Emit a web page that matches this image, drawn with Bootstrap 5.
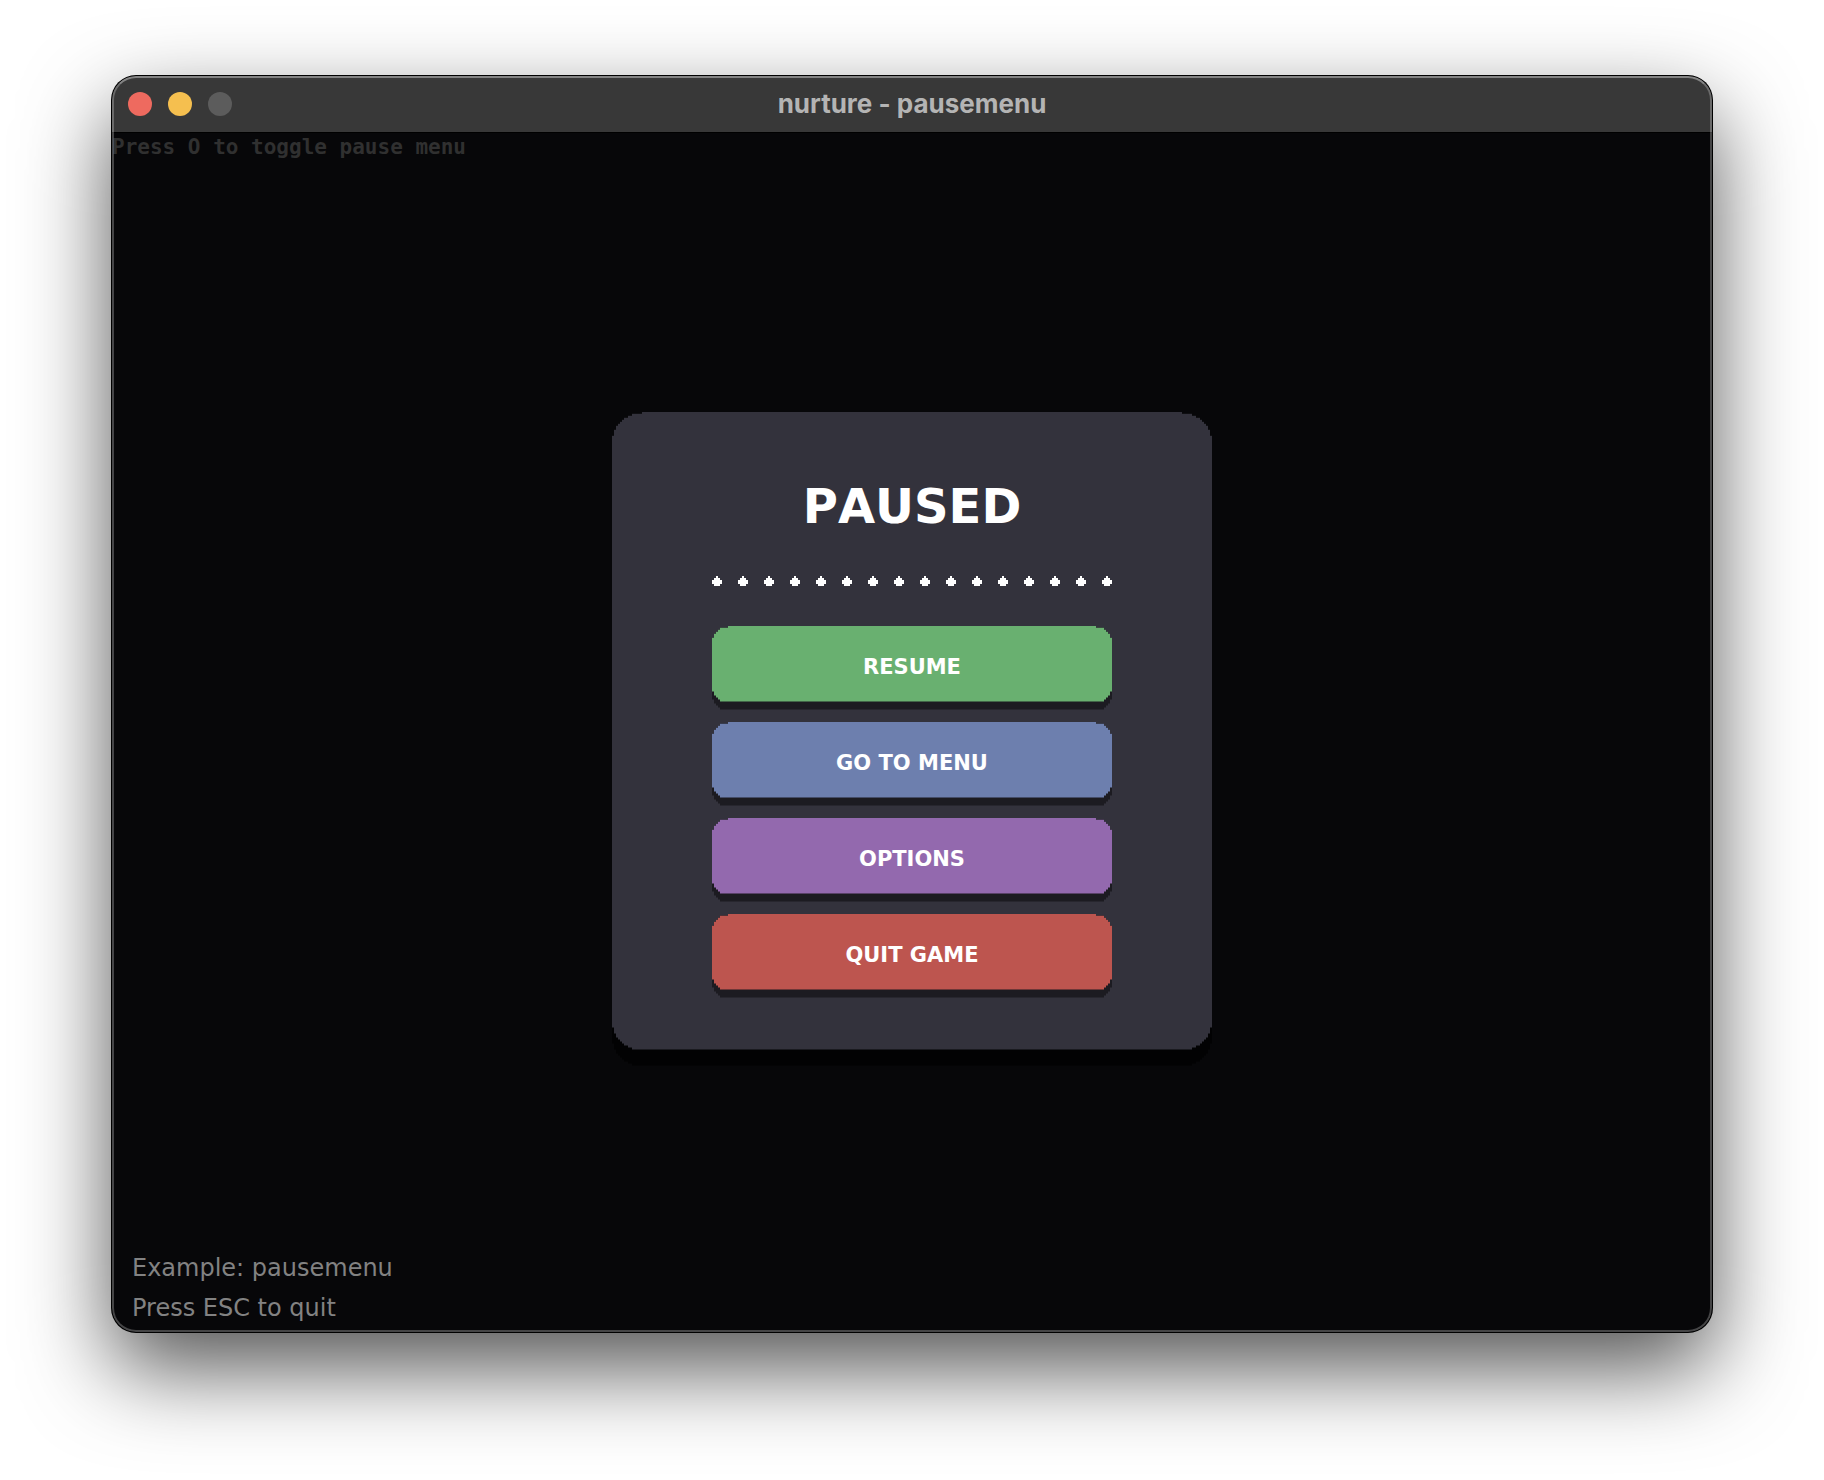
<!DOCTYPE html>
<html lang="en">
<head>
<meta charset="utf-8">
<meta name="viewport" content="width=device-width, initial-scale=1">
<title>nurture - pausemenu</title>
<link href="https://cdn.jsdelivr.net/npm/bootstrap@5.3.0/dist/css/bootstrap.min.css" rel="stylesheet">
<style>
  body { background: #fff; font-family: "DejaVu Sans", sans-serif; }
  .desktop { min-height: 100vh; padding: 76px 112px 148px; overflow: hidden; }
  .app-window {
    position: relative;
    background: #070709;
    border-radius: 24px;
    box-shadow: 0 0 0 1px #000, 0 36px 88px rgba(0, 0, 0, .68);
    overflow: hidden;
  }
  /* light rim drawn over the window edge */
  .app-window::after {
    content: "";
    position: absolute;
    inset: 0;
    border: 2px solid rgba(255, 255, 255, .25);
    border-top-color: rgba(255, 255, 255, .38);
    border-radius: 24px;
    pointer-events: none;
  }
  .title-bar { height: 57px; background: #383838; border-bottom: 1px solid #000; }
  .title-text { font: 700 26px/32px Inter, sans-serif; color: #b4b4b4; margin: 0; }
  .lights { width: 136px; padding-left: 16px; gap: 16px; }
  .lights span { width: 24px; height: 24px; border-radius: 50%; }
  .light-close { background: #ee6a5f; }
  .light-min { background: #f5bf4f; }
  .light-off { background: #5c5c5c; }
  .hint { font: bold 21px/28px "DejaVu Sans Mono", monospace; color: #303030; }
  .stage { padding-top: 68px; }
  .credits { font-size: 24px; line-height: 40px; color: #828282; padding: 0 20px 4px; }

  /* stepped corners on a 2px grid */
  .panel-cut, .panel-face {
    clip-path: polygon(
      0 24px, 2px 24px, 2px 18px, 4px 18px, 4px 14px, 6px 14px, 6px 12px, 8px 12px, 8px 10px, 10px 10px, 10px 8px, 12px 8px, 12px 6px, 16px 6px, 16px 4px, 20px 4px, 20px 2px, 30px 2px, 30px 0,
      calc(100% - 30px) 0, calc(100% - 30px) 2px, calc(100% - 20px) 2px, calc(100% - 20px) 4px, calc(100% - 16px) 4px, calc(100% - 16px) 6px, calc(100% - 12px) 6px, calc(100% - 12px) 8px, calc(100% - 10px) 8px, calc(100% - 10px) 10px, calc(100% - 8px) 10px, calc(100% - 8px) 12px, calc(100% - 6px) 12px, calc(100% - 6px) 14px, calc(100% - 4px) 14px, calc(100% - 4px) 18px, calc(100% - 2px) 18px, calc(100% - 2px) 24px, 100% 24px,
      100% calc(100% - 22px), calc(100% - 2px) calc(100% - 22px), calc(100% - 2px) calc(100% - 16px), calc(100% - 4px) calc(100% - 16px), calc(100% - 4px) calc(100% - 12px), calc(100% - 6px) calc(100% - 12px), calc(100% - 6px) calc(100% - 10px), calc(100% - 8px) calc(100% - 10px), calc(100% - 8px) calc(100% - 8px), calc(100% - 10px) calc(100% - 8px), calc(100% - 10px) calc(100% - 6px), calc(100% - 12px) calc(100% - 6px), calc(100% - 12px) calc(100% - 4px), calc(100% - 16px) calc(100% - 4px), calc(100% - 16px) calc(100% - 2px), calc(100% - 20px) calc(100% - 2px), calc(100% - 20px) 100%,
      20px 100%, 20px calc(100% - 2px), 16px calc(100% - 2px), 16px calc(100% - 4px), 12px calc(100% - 4px), 12px calc(100% - 6px), 10px calc(100% - 6px), 10px calc(100% - 8px), 8px calc(100% - 8px), 8px calc(100% - 10px), 6px calc(100% - 10px), 6px calc(100% - 12px), 4px calc(100% - 12px), 4px calc(100% - 16px), 2px calc(100% - 16px), 2px calc(100% - 22px), 0 calc(100% - 22px));
  }
  .panel-cut { width: 600px; max-width: 100%; background: #020203; padding-bottom: 16px; }
  .panel-face { background: #33323c; padding: 64px 100px 52px; }
  .pause-title { font-size: 48px; line-height: 60px; font-weight: 700; font-kerning: none; color: #fff; margin: 0 0 40px; text-align: center; }
  .pip-row { margin-bottom: 40px; }
  .pip-row svg { width: 10px; height: 10px; fill: #fff; display: block; }
  .menu-list { gap: 12px; }
  .menu-btn {
    display: block; width: 100%; border: 0; padding: 0 0 8px;
    background: #1c1b21; color: #fff;
  }
  .menu-btn span { display: block; height: 76px; font-size: 21px; line-height: 82px; font-weight: 700; font-kerning: none; }
  .menu-btn, .menu-btn span {
    clip-path: polygon(
      0 12px, 2px 12px, 2px 8px, 4px 8px, 4px 6px, 6px 6px, 6px 4px, 8px 4px, 8px 2px, 16px 2px, 16px 0,
      calc(100% - 16px) 0, calc(100% - 16px) 2px, calc(100% - 8px) 2px, calc(100% - 8px) 4px, calc(100% - 6px) 4px, calc(100% - 6px) 6px, calc(100% - 4px) 6px, calc(100% - 4px) 8px, calc(100% - 2px) 8px, calc(100% - 2px) 12px, 100% 12px,
      100% calc(100% - 10px), calc(100% - 2px) calc(100% - 10px), calc(100% - 2px) calc(100% - 6px), calc(100% - 4px) calc(100% - 6px), calc(100% - 4px) calc(100% - 4px), calc(100% - 6px) calc(100% - 4px), calc(100% - 6px) calc(100% - 2px), calc(100% - 8px) calc(100% - 2px), calc(100% - 8px) 100%,
      8px 100%, 8px calc(100% - 2px), 6px calc(100% - 2px), 6px calc(100% - 4px), 4px calc(100% - 4px), 4px calc(100% - 6px), 2px calc(100% - 6px), 2px calc(100% - 10px), 0 calc(100% - 10px));
  }
  .face-resume { background: #69b070; }
  .face-menu { background: #6d7fae; }
  .face-options { background: #9369ae; }
  .face-quit { background: #bd554f; }
</style>
</head>
<body>
<svg width="0" height="0" class="position-absolute" aria-hidden="true">
  <symbol id="pip" viewBox="0 0 10 10"><path d="M4 0H6V2H8V4H10V8H8V10H2V8H0V4H2V2H4Z"/></symbol>
</svg>
<div class="desktop d-flex">
  <div class="app-window d-flex flex-column flex-grow-1">
    <header class="title-bar d-flex align-items-center justify-content-between flex-shrink-0">
      <div class="lights d-flex"><span class="light-close"></span><span class="light-min"></span><span class="light-off"></span></div>
      <h1 class="title-text">nurture - pausemenu</h1>
      <div class="lights"></div>
    </header>
    <div class="hint">Press O to toggle pause menu</div>
    <main class="stage flex-grow-1 d-flex justify-content-center align-items-center">
      <div class="panel-cut">
        <section class="panel-face">
          <h2 class="pause-title">PAUSED</h2>
          <div class="pip-row d-flex justify-content-between" aria-hidden="true">
            <svg><use href="#pip"/></svg><svg><use href="#pip"/></svg><svg><use href="#pip"/></svg><svg><use href="#pip"/></svg>
            <svg><use href="#pip"/></svg><svg><use href="#pip"/></svg><svg><use href="#pip"/></svg><svg><use href="#pip"/></svg>
            <svg><use href="#pip"/></svg><svg><use href="#pip"/></svg><svg><use href="#pip"/></svg><svg><use href="#pip"/></svg>
            <svg><use href="#pip"/></svg><svg><use href="#pip"/></svg><svg><use href="#pip"/></svg><svg><use href="#pip"/></svg>
          </div>
          <div class="menu-list d-grid">
            <button type="button" class="menu-btn"><span class="face-resume">RESUME</span></button>
            <button type="button" class="menu-btn"><span class="face-menu">GO TO MENU</span></button>
            <button type="button" class="menu-btn"><span class="face-options">OPTIONS</span></button>
            <button type="button" class="menu-btn"><span class="face-quit">QUIT GAME</span></button>
          </div>
        </section>
      </div>
    </main>
    <footer class="credits">
      <div>Example: pausemenu</div>
      <div>Press ESC to quit</div>
    </footer>
  </div>
</div>
<script src="https://cdn.jsdelivr.net/npm/bootstrap@5.3.0/dist/js/bootstrap.bundle.min.js"></script>
</body>
</html>
